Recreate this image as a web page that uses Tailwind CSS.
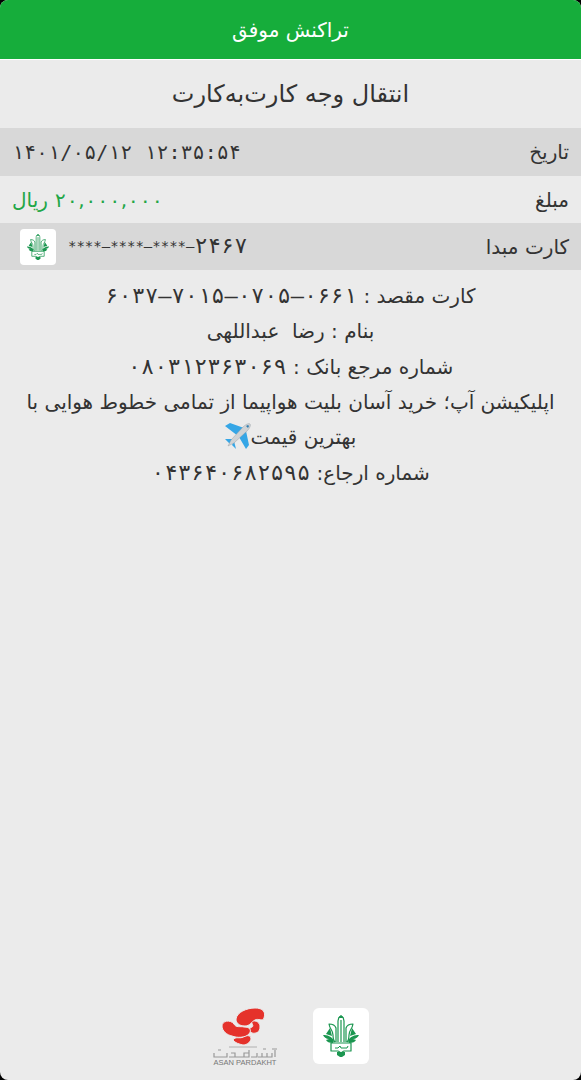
<!DOCTYPE html>
<html lang="fa" dir="rtl">
<head>
<meta charset="utf-8">
<meta name="viewport" content="width=device-width, initial-scale=1">
<title>تراکنش موفق</title>
<script src="https://cdn.jsdelivr.net/npm/@tailwindcss/browser@4"></script>
</head>
<body class="bg-black font-['DejaVu_Sans',sans-serif] text-[#333]">
<svg class="hidden" aria-hidden="true">
  <symbol id="bank" viewBox="0 0 36 42">
    <g fill="none" stroke="#1b9650" stroke-width="1.2" stroke-linejoin="round">
      <path d="M15 27V6c0-3 1-4 3-5 2 1 3 2 3 5v21M18 5v22"/>
      <path d="M13 27V13c-1-3-4-4-7-4 1 6 4 6 4 11 0 3 0 5 2 7M23 27V13c1-3 4-4 7-4-1 6-4 6-4 11 0 3 0 5-2 7"/>
      <path d="M8 28v8h7c1 0 2 2 3 2s2-2 3-2h7v-8z"/>
      <path d="M12 33h3l2-2 1 2h6l1-2" stroke-width="1"/>
    </g>
    <path fill="#1b9650" d="M7 13l-4 6 6 2zM29 13l4 6-6 2zM0 20c4 0 9 1 11 6l-1 2c-4 0-6-1-7-3l3-1c-3 0-5-2-6-4zM36 20c-4 0-9 1-11 6l1 2c4 0 6-1 7-3l-3-1c3 0 5-2 6-4zM14 37h8v3l-3 2h-2l-3-2zM15 3l3-3 3 3z"/>
  </symbol>
</svg>
<div class="flex min-h-screen flex-col overflow-hidden rounded-lg bg-[#ebebeb]">
  <header class="flex h-15 items-center justify-center border-b border-white bg-[#16ad3b] text-white">
    <h1 class="text-xl">تراکنش موفق</h1>
  </header>
  <main class="flex flex-1 flex-col">
    <h2 class="flex h-17 items-center justify-center text-2xl">انتقال وجه کارت‌به‌کارت</h2>
    <dl class="text-xl">
      <div class="flex h-12 items-center justify-between bg-[#d8d8d8] px-3">
        <dt>تاریخ</dt><dd dir="ltr" class="font-['DejaVu_Sans_Mono',monospace]">۱۴۰۱/۰۵/۱۲ ۱۲:۳۵:۵۴</dd>
      </div>
      <div class="flex h-[47px] items-center justify-between px-3">
        <dt>مبلغ</dt><dd class="text-[#22a646]"><bdi dir="ltr" class="font-['DejaVu_Sans_Mono',monospace]">۲۰<span class="font-['DejaVu_Sans',sans-serif]">,</span>۰۰۰<span class="font-['DejaVu_Sans',sans-serif]">,</span>۰۰۰</bdi> ریال</dd>
      </div>
      <div class="flex h-[47px] items-center justify-between bg-[#d8d8d8] pr-3 pl-5">
        <dt>کارت مبدا</dt>
        <dd dir="ltr" class="flex items-center gap-3">
          <span class="flex size-9 items-center justify-center rounded-sm bg-white"><svg class="h-[26px] w-6" role="img" aria-label="بانک"><use href="#bank"/></svg></span>
          <span class="flex items-center font-['DejaVu_Sans_Mono',monospace]"><span class="text-sm">****–****–****–</span><span class="text-[22px]">۲۴۶۷</span></span>
        </dd>
      </div>
    </dl>
    <div class="px-4 pt-2 text-center text-xl leading-[35px]">
      <p>کارت مقصد : <bdi dir="ltr" class="font-['DejaVu_Sans_Mono',monospace] text-[22px]">۶۰۳۷–۷۰۱۵–۰۷۰۵–۰۶۶۱</bdi></p>
      <p>بنام : رضا&nbsp; عبداللهی</p>
      <p>شماره مرجع بانک : <bdi dir="ltr" class="font-['DejaVu_Sans_Mono',monospace] text-[22px]">۰۸۰۳۱۲۳۶۳۰۶۹</bdi></p>
      <p>اپلیکیشن آپ؛ خرید آسان بلیت هواپیما از تمامی خطوط هوایی با<br>بهترین قیمت<svg class="inline-block size-[26px] align-[-5px]" viewBox="0 0 26 26" role="img" aria-label="هواپیما"><path fill="#35a6e6" d="M0 3l5-3 14 5-6 8zM21 8l3 14-3 4-7-12zM0 16l9 0-4 5zM9 18l2 8-4-4z"/><path fill="#d0d3d5" stroke="#8a959d" stroke-width=".4" d="M25 1c1 1 0 4-3 7L9 20l-6 3 3-6L18 4c3-3 6-4 7-3z"/><path fill="#317cae" d="M21 3l2-1 1 1-1 2z"/></svg></p>
      <p>شماره ارجاع: <bdi dir="ltr" class="font-['DejaVu_Sans_Mono',monospace] text-[22px]">۰۴۳۶۴۰۶۸۲۵۹۵</bdi></p>
    </div>
  </main>
  <footer class="flex items-center justify-center gap-9 pb-3.5">
    <span class="flex size-14 items-center justify-center rounded-md bg-white"><svg class="h-[42px] w-9" role="img" aria-label="بانک"><use href="#bank"/></svg></span>
    <svg class="h-15 w-16" viewBox="0 0 64 60" role="img" aria-label="ASAN PARDAKHT">
      <g fill="#e5322b" stroke="#ebebeb" stroke-width="1">
        <path d="M38 15c6-1 9 2 9 6 0 5-4 7-8 6-4-2-3-5 0-6 2-1 0-3-1-6z"/>
        <path d="M20 34c2-4 7-1 10-3 3-2 7-2 8 1 0 4-4 7-8 7-4-1-8-2-10-5z"/>
        <path d="M9 20c0-5 8-7 12-2 2 4 6 2 10 3 6 0 8 3 5 7-4 4-12 4-17 2-5-1-10-5-10-10z"/>
        <path d="M23 13C24 6 34 2 42 2c8 0 11 4 9 10-1 4-6 0-9 2-4 2-5 6-10 6-6 0-9-3-9-7z"/>
      </g>
      <path stroke="#b0b0b0" d="M16 41h28"/>
      <path fill="none" stroke="#999" stroke-width="1.2" d="M1 47v4h13v-4M5 44h3M16 51h6v-4h-4M22 51h14v-4h-5v4M36 47v-3M38 51h6v-4M45 51h14v-4M49 47v4M54 47v4M62 44v7M59 43h5M50 43h3"/>
      <text x="32" y="59" text-anchor="middle" direction="ltr" font-family="Liberation Sans" font-size="7.5" fill="#777">ASAN PARDAKHT</text>
    </svg>
  </footer>
</div>
</body>
</html>
